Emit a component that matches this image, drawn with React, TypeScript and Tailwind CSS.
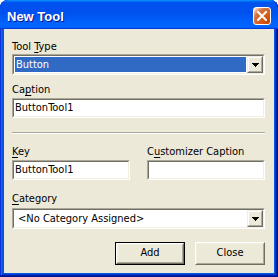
import React from "react";

const uiFont = "font-['DejaVu_Sans_Condensed','Liberation_Sans',sans-serif]";

function U({ children }: { children: React.ReactNode }) {
  return <span className="underline underline-offset-[2px] decoration-1">{children}</span>;
}

function Label({ children }: { children: React.ReactNode }) {
  return <div className="h-[13px] text-[11px] leading-[13px] text-black whitespace-nowrap">{children}</div>;
}

// classic sunken 2px edge
function Sunken({ className, children }: { className?: string; children?: React.ReactNode }) {
  return (
    <div className={`border border-t-[#aca899] border-l-[#aca899] border-b-white border-r-white ${className ?? ""}`}>
      <div className="flex h-full w-full border border-t-[#716f64] border-l-[#716f64] border-b-[#f1efe2] border-r-[#f1efe2] bg-white">
        {children}
      </div>
    </div>
  );
}

function TextBox({ value, className }: { value?: string; className?: string }) {
  return (
    <Sunken className={`h-[20px] ${className ?? ""}`}>
      <span className="pl-[1px] text-[11px] leading-[16px] text-black">{value}</span>
    </Sunken>
  );
}

function Arrow() {
  return (
    <svg width="7" height="4" viewBox="0 0 7 4" shapeRendering="crispEdges">
      <rect x="0" y="0" width="7" height="1" fill="#000" />
      <rect x="1" y="1" width="5" height="1" fill="#000" />
      <rect x="2" y="2" width="3" height="1" fill="#000" />
      <rect x="3" y="3" width="1" height="1" fill="#000" />
    </svg>
  );
}

function Combo({ value, selected }: { value: string; selected?: boolean }) {
  return (
    <Sunken className="h-[21px] w-full">
      <div className="flex flex-1 p-[1px]">
        {selected ? (
          <div className="flex-1 bg-[#316ac5] pl-[1px] text-[11px] leading-[15px] text-white">{value}</div>
        ) : (
          <div className="flex-1 pl-[3px] text-[11px] leading-[15px] text-black">{value}</div>
        )}
      </div>
      <div className="h-[17px] w-[16px] border border-t-[#f1efe2] border-l-[#f1efe2] border-b-[#716f64] border-r-[#716f64]">
        <div className="flex h-full w-full items-center justify-center border border-t-white border-l-white border-b-[#aca899] border-r-[#aca899] bg-[#ece9d8] pt-[1px]">
          <Arrow />
        </div>
      </div>
    </Sunken>
  );
}

function PushButton({ label, isDefault }: { label: string; isDefault?: boolean }) {
  const face = (
    <div className="h-full w-full border border-t-white border-l-white border-b-[#716f64] border-r-[#716f64]">
      <div className="flex h-full w-full items-center justify-center border border-t-[#f1efe2] border-l-[#f1efe2] border-b-[#aca899] border-r-[#aca899] bg-[#ece9d8] text-[11px] text-black">
        {label}
      </div>
    </div>
  );
  return (
    <div className={`h-[23px] w-[70px] ${isDefault ? "border border-black" : ""}`}>{face}</div>
  );
}

export default function App() {
  return (
    <div className={`h-[277px] w-[278px] bg-white ${uiFont}`}>
      <div className="flex h-full flex-col overflow-hidden rounded-t-[8px] bg-[#0855dd] shadow-[inset_-1px_-1px_#00138c,inset_1px_1px_#0831d9,inset_-2px_-2px_#001ea0,inset_2px_2px_#166aee,inset_-3px_-3px_#003bda,inset_3px_3px_#0855dd]">
        {/* title bar */}
        <div className="flex h-[29px] shrink-0 items-start justify-between rounded-t-[8px] bg-[linear-gradient(180deg,#0997ff,#0053ee_8%,#0050ee_40%,#06f_88%,#06f_93%,#005bff_95%,#003dd7_96%,#003dd7)] pl-[7px] pr-[7px]">
          <span className="mt-[9px] font-['Liberation_Sans',sans-serif] text-[13px] font-bold leading-[15px] text-white [text-shadow:1px_1px_#0f1089]">
            New Tool
          </span>
          <div className="mt-[7px] flex h-[18px] w-[18px] items-center justify-center rounded-[3px] border border-white bg-[radial-gradient(circle_at_90%_90%,#cc4600_0%,#dc6527_55%,#cd7546_70%,#ffccb2_90%,#fff_100%)]">
            <svg width="10" height="10" viewBox="0 0 10 10">
              <path d="M1 1 L9 9 M9 1 L1 9" stroke="#fff" strokeWidth="2" strokeLinecap="square" />
            </svg>
          </div>
        </div>

        {/* client area */}
        <div className="mx-[4px] mb-[4px] flex flex-1 flex-col bg-[#ece9d8] pl-[8px] pr-[9px] pt-[11px]">
          <Label>
            Tool <U>T</U>ype
          </Label>
          <div className="mt-[1px]">
            <Combo value="Button" selected />
          </div>

          <div className="mt-[8px]">
            <Label>
              Ca<U>p</U>tion
            </Label>
          </div>
          <TextBox value="ButtonTool1" className="mt-[2px] w-full" />

          <div className="mt-[14px] h-[2px] border-t border-[#aca899] bg-white" />

          <div className="mt-[11px] flex gap-[17px]">
            <div className="flex w-[118px] flex-col">
              <Label>
                <U>K</U>ey
              </Label>
              <TextBox value="ButtonTool1" className="mt-[2px] w-full" />
            </div>
            <div className="flex w-[118px] flex-col">
              <Label>
                C<U>u</U>stomizer Caption
              </Label>
              <TextBox className="mt-[2px] w-full" />
            </div>
          </div>

          <div className="mt-[12px]">
            <Label>
              <U>C</U>ategory
            </Label>
          </div>
          <div className="mt-[3px]">
            <Combo value="<No Category Assigned>" />
          </div>

          <div className="mt-[13px] flex justify-end gap-[10px]">
            <PushButton label="Add" isDefault />
            <PushButton label="Close" />
          </div>
        </div>
      </div>
    </div>
  );
}
